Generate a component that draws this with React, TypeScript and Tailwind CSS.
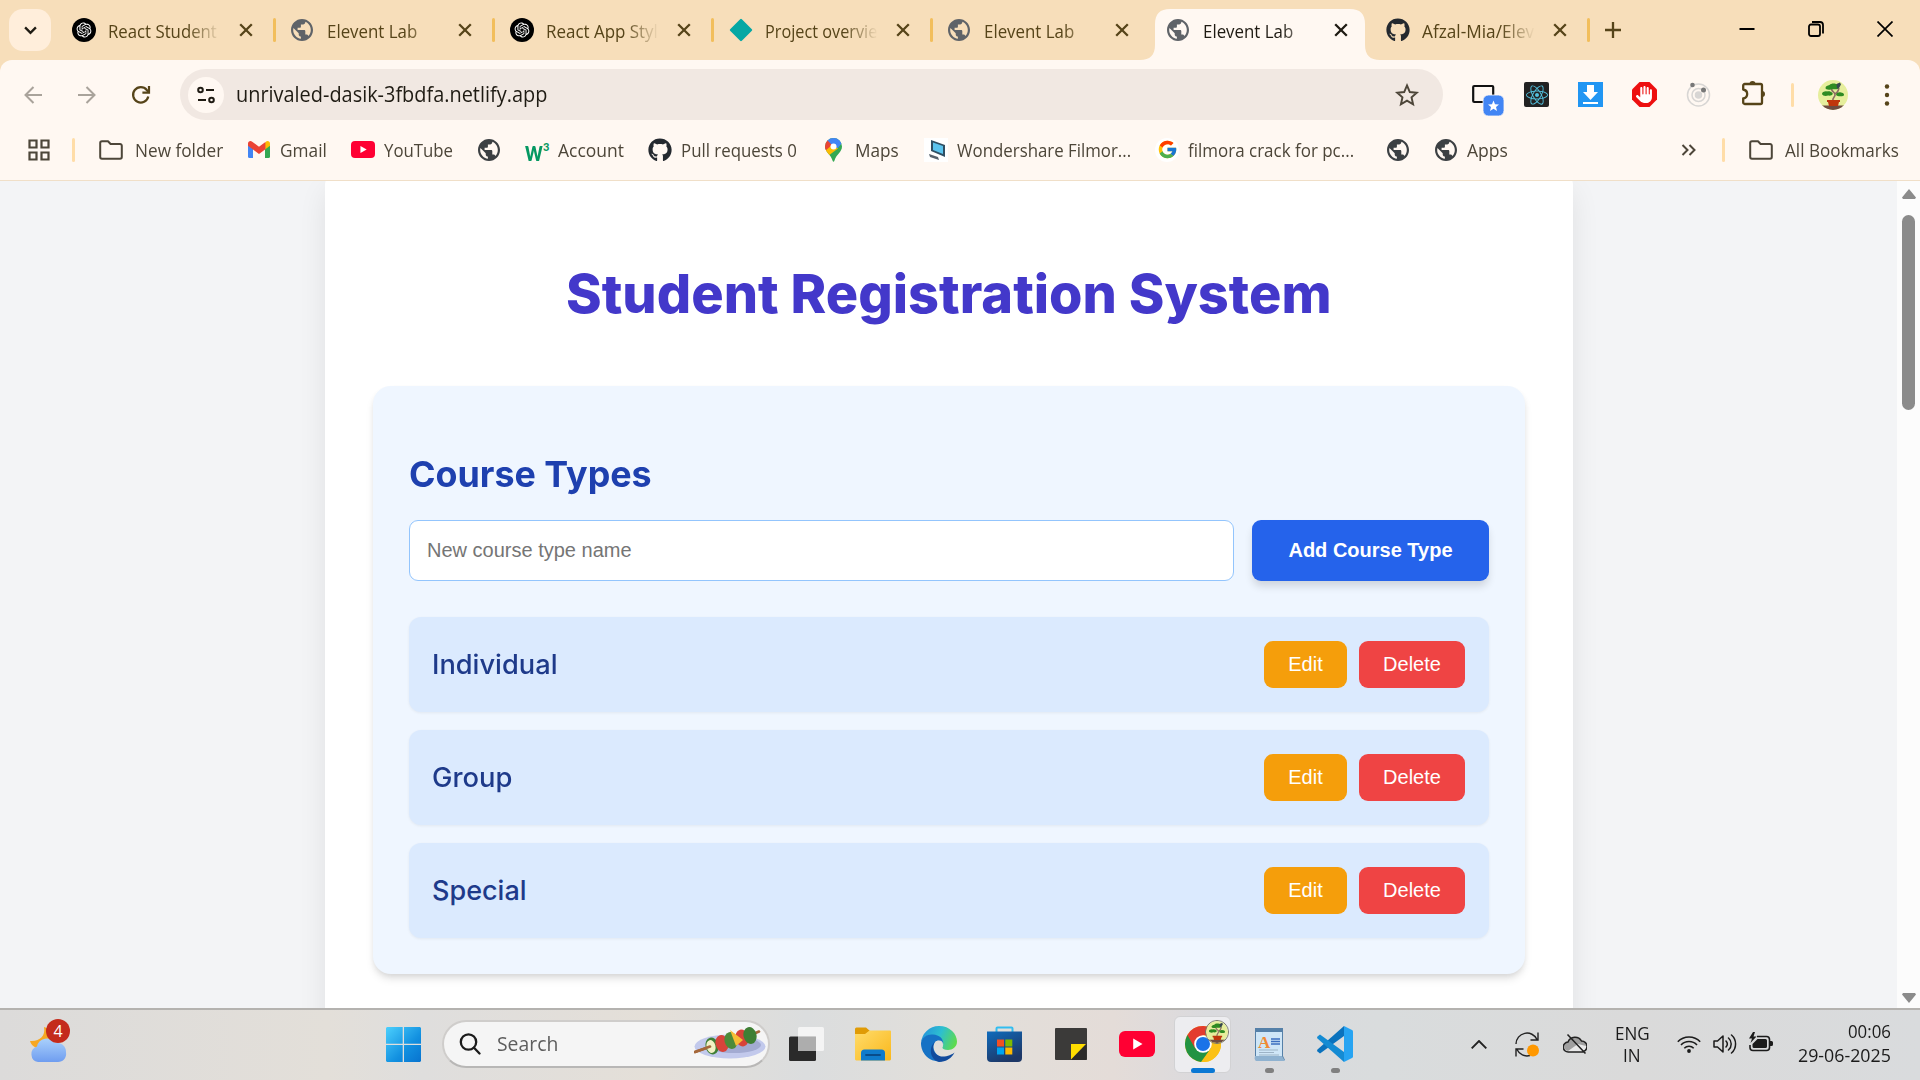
import React, { useLayoutEffect, useRef, useState } from 'react';
import { RiOpenaiFill } from 'react-icons/ri';
import { FaGithub, FaReact, FaHand } from 'react-icons/fa6';
import { FcGoogle } from 'react-icons/fc';

/** Single-line label whose glyphs are condensed or widened to fill `width`. */
function Label({ text, width, className = '' }: { text: string; width: number; className?: string }) {
  const ref = useRef<HTMLSpanElement>(null);
  const [scale, setScale] = useState(1);
  useLayoutEffect(() => {
    if (ref.current) setScale(width / ref.current.offsetWidth);
  }, [width, text]);
  return (
    <span className={`block shrink-0 whitespace-nowrap ${className}`} style={{ width }}>
      <span ref={ref} className="inline-block origin-left" style={{ transform: `scaleX(${scale})` }}>
        {text}
      </span>
    </span>
  );
}

function Globe({ className = '' }: { className?: string }) {
  return (
    <svg viewBox="2 2 20 20" className={`h-[22px] w-[22px] shrink-0 ${className}`} fill="currentColor">
      <path d="M12 2C6.48 2 2 6.48 2 12s4.48 10 10 10 10-4.48 10-10S17.52 2 12 2zm-1 17.93c-3.95-.49-7-3.85-7-7.93 0-.62.08-1.21.21-1.79L9 15v1c0 1.1.9 2 2 2v1.93zm6.900-2.540c-.26-.81-1-1.39-1.900-1.390h-1v-3c0-.55-.45-1-1-1H8v-2h2c.55 0 1-.45 1-1V7h2c1.1 0 2-.9 2-2v-.41c2.930 1.190 5 4.060 5 7.410 0 2.080-.8 3.970-2.100 5.390z" />
    </svg>
  );
}

function OpenAI() {
  return (
    <span className="flex h-6 w-6 items-center justify-center rounded-full bg-black text-white">
      <RiOpenaiFill size={18} />
    </span>
  );
}

function Diamond() {
  return (
    <svg viewBox="0 0 24 24" className="h-6 w-6">
      <path d="M12 2 22 12 12 22 2 12Z" fill="#05a8a4" stroke="#05a8a4" strokeWidth="2.4" strokeLinejoin="round" />
    </svg>
  );
}

function Folder() {
  return (
    <svg viewBox="0 0 24 20" className="h-5 w-6 shrink-0" fill="none" stroke="#4d4639" strokeWidth="2" strokeLinejoin="round">
      <path d="M1.2 17V3a1.8 1.8 0 0 1 1.8-1.8h6L11.6 4H21a1.8 1.8 0 0 1 1.8 1.8V17a1.8 1.8 0 0 1-1.8 1.8H3A1.8 1.8 0 0 1 1.200 17Z" />
    </svg>
  );
}

function Plant({ className = '' }: { className?: string }) {
  return (
    <svg viewBox="0 0 30 30" className={className}>
      <defs>
        <clipPath id="avatar-disc">
          <circle cx="15" cy="15" r="15" />
        </clipPath>
      </defs>
      <g clipPath="url(#avatar-disc)">
        <rect width="30" height="30" fill="#e6ee9c" />
        <rect y="25.500" width="30" height="5" fill="#6d4c41" />
        <path d="M15 21c-1-4 3-4 2-7-.5-2-3-2-3.500-5M16 14c2 0 4-2 5-6" stroke="#8d6e63" strokeWidth="1.600" fill="none" />
        <path d="M7.500 8c0-2 2-2.500 4-3C13 3 18 3 20 5c1.500 0 2 3-.5 4C17 10 15 8.500 13 9.500 10 10 7.500 9.500 7.500 8ZM4 14c0-2 3-3 5-2.500 2-.5 4 0 5.500 1.500 1 2-2 3-4.500 2.500C8 16.500 4.500 16 4 14ZM18 15c0-2 3-3.500 5-2.500 3 0 4 3 2 3.500-2 .5-6 .5-7-1Z" fill="#2e8b22" />
        <path d="M18.500 4l3.500-1.500 1 2-2 3.500-2 .5Z" fill="#37474f" />
        <path d="M9 20h13v2h-1l-1 4h-9l-1-4H9Z" fill="#bf360c" />
      </g>
    </svg>
  );
}

function Cross({ className = '' }: { className?: string }) {
  return (
    <svg viewBox="0 0 14 14" className={`h-[14px] w-[14px] ${className}`} stroke="currentColor" strokeWidth="2.300">
      <path d="M1.200 1.200 12.800 12.800M12.800 1.200 1.200 12.800" />
    </svg>
  );
}

interface TabInfo {
  icon: React.ReactNode;
  title: string;
  width: number;
  active?: boolean;
  divider?: boolean;
}

const tabs: TabInfo[] = [
  { icon: <OpenAI />, title: 'React Student', width: 109, divider: true },
  { icon: <Globe className="text-[#5f6368]" />, title: 'Elevent Lab', width: 90, divider: true },
  { icon: <OpenAI />, title: 'React App Styl', width: 112, divider: true },
  { icon: <Diamond />, title: 'Project overvie', width: 112, divider: true },
  { icon: <Globe className="text-[#5f6368]" />, title: 'Elevent Lab', width: 90 },
  { icon: <Globe className="text-[#5f6368]" />, title: 'Elevent Lab', width: 90, active: true },
  { icon: <FaGithub size={24} color="#24292f" />, title: 'Afzal-Mia/Elev', width: 112, divider: true },
];

function Tab({ tab }: { tab: TabInfo }) {
  return (
    <div className="relative flex h-[60px] w-[219px] shrink-0 items-center pl-[15px]">
      {tab.active && (
        <svg viewBox="0 0 240 51" className="absolute -left-3 top-[9px] h-[51px] w-[240px]" fill="#fff8f2">
          <path d="M0 51C10 51 15 46 15 36V15C15 5 20 0 30 0H210C220 0 225 5 225 15V36C225 46 230 51 240 51Z" />
        </svg>
      )}
      <span className="relative flex h-6 w-6 items-center">{tab.icon}</span>
      <div
        className={`relative ml-3 w-[113px] pt-[2px] [mask-image:linear-gradient(to_right,black_70%,transparent)] ${tab.active ? 'text-[#1f1b13]' : 'text-[#564419]'}`}
      >
        <Label text={tab.title} width={tab.width} className="text-[18px] leading-6" />
      </div>
      <Cross className={`relative ml-[18px] ${tab.active ? 'text-[#1f1b13]' : 'text-[#564419]'}`} />
      {tab.divider && <span className="ml-auto h-6 w-[3px] rounded bg-[#f2be5c]" />}
    </div>
  );
}

function TabStrip() {
  return (
    <div className="flex h-[60px] items-center bg-[#f7deba] pl-[9px]">
      <button className="mr-[6px] flex h-[42px] w-[42px] items-center justify-center rounded-[14px] bg-[#ffeedb]">
        <svg viewBox="0 0 14 10" className="h-[9px] w-[13px]" fill="none" stroke="#1f1b13" strokeWidth="2.600">
          <path d="M1 1.500 7 7.500 13 1.500" />
        </svg>
      </button>
      {tabs.map((tab, i) => (
        <Tab key={i} tab={tab} />
      ))}
      <svg viewBox="0 0 16 16" className="ml-[15px] h-4 w-4" stroke="#564419" strokeWidth="2.300">
        <path d="M8 0V16M0 8H16" />
      </svg>
      <svg viewBox="0 0 16 16" className="ml-[118px] h-4 w-4" stroke="#000" strokeWidth="2">
        <path d="M0.500 7H15.500" />
      </svg>
      <svg viewBox="0 0 16 16" className="ml-[53px] h-4 w-4 -translate-y-px" fill="none" stroke="#000" strokeWidth="1.800">
        <rect x="1" y="3.500" width="11" height="11.500" rx="2" />
        <path d="M4 1H12A3 3 0 0 1 15 4V12.500" />
      </svg>
      <svg viewBox="0 0 16 16" className="ml-[53px] h-4 w-4 -translate-y-px" stroke="#000" strokeWidth="1.700">
        <path d="M.5.5 15.500 15.500M15.500.5.5 15.500" />
      </svg>
    </div>
  );
}

function Arrow({ className = '' }: { className?: string }) {
  return (
    <svg viewBox="0 0 18 18" className={`h-[18px] w-[18px] ${className}`} fill="none" stroke="#a9a39b" strokeWidth="2">
      <path d="M9.500 1 1.500 9 9.500 17M1.500 9H18" />
    </svg>
  );
}

function Toolbar() {
  return (
    <div className="bg-[#f7deba]">
      <div className="flex h-[69px] items-center rounded-t-[12px] bg-[#fff8f2] pl-6">
        <Arrow />
        <Arrow className="ml-9 rotate-180" />
        <svg viewBox="0 0 20 20" className="ml-[35px] h-5 w-5" fill="none" stroke="#564419" strokeWidth="2.200">
          <path d="M17.300 11.500A7.700 7.700 0 1 1 15.800 5L18 7.500" />
          <path d="M18 1V7.600H11.400" />
        </svg>
        <div className="ml-[29px] flex h-[51px] w-[1263px] shrink-0 items-center rounded-full bg-[#f1e8e2] pl-2 pr-[23px]">
          <span className="flex h-9 w-9 items-center justify-center rounded-full bg-[#fff8f2]">
            <svg viewBox="0 0 18 18" className="h-[18px] w-[18px]" fill="none" stroke="#1f1b13" strokeWidth="2">
              <circle cx="3.500" cy="4" r="2.300" />
              <path d="M9 4H17M1 14H9" />
              <circle cx="14.500" cy="14" r="2.300" />
            </svg>
          </span>
          <Label text="unrivaled-dasik-3fbdfa.netlify.app" width={311} className="ml-3 -translate-y-px text-[21px] leading-7 text-[#1f1b13]" />
          <svg viewBox="0 0 24 24" className="ml-auto h-[26px] w-[26px]" fill="none" stroke="#4d4639" strokeWidth="1.800">
            <path d="M12 3.200 14.600 9.300 21 9.900 16.200 14.200 17.600 20.600 12 17.200 6.400 20.600 7.800 14.200 3 9.900 9.400 9.300Z" />
          </svg>
        </div>
        <svg viewBox="0 0 32 32" className="ml-[29px] h-8 w-8 shrink-0 translate-y-[5px]">
          <rect x="1.200" y="2" width="20" height="16" rx="1" fill="#fff8f2" stroke="#111" strokeWidth="2.200" />
          <rect x="11" y="11" width="21" height="21" rx="5.500" fill="#4285f4" stroke="#fff8f2" strokeWidth="0.800" />
          <path d="M21.500 16.500l1.500 3.700 4 .3-3 2.500 1 3.900-3.500-2.200-3.500 2.200 1-3.900-3-2.500 4-.3Z" fill="#fff" />
        </svg>
        <span className="ml-5 flex h-[25px] w-[25px] shrink-0 items-center justify-center rounded-[2px] bg-[#222]">
          <FaReact size={22} color="#53c1de" />
        </span>
        <svg viewBox="0 0 25 25" className="ml-[29px] h-[25px] w-[25px] shrink-0">
          <rect width="25" height="25" fill="#2196f3" />
          <path d="M9 3h7v7h4l-7.500 8L5 10h4ZM5 20h15v2H5Z" fill="#fff" />
        </svg>
        <span className="ml-[29px] flex h-[25px] w-[25px] shrink-0 items-center justify-center bg-[#ed1010] [clip-path:polygon(30%_0,70%_0,100%_30%,100%_70%,70%_100%,30%_100%,0_70%,0_30%)]">
          <FaHand size={17} color="#fff" />
        </span>
        <svg viewBox="0 0 25 25" className="ml-[29px] h-[25px] w-[25px] shrink-0" fill="none" stroke="#d8d6d4" strokeWidth="1.500">
          <circle cx="12.500" cy="13" r="11" />
          <circle cx="12.500" cy="13" r="6.500" />
          <circle cx="12.500" cy="13" r="3" fill="#d8d6d4" />
          <circle cx="6.500" cy="3" r="2.300" fill="#777" stroke="none" />
          <circle cx="17.500" cy="8" r="2.500" fill="#777" stroke="none" />
        </svg>
        <svg viewBox="0 0 26 26" className="ml-[30px] h-[26px] w-[26px] shrink-0 -translate-y-[2px]" fill="none" stroke="#564419" strokeWidth="2.300" strokeLinejoin="round">
          <path d="M2.200 5.500A1.500 1.500 0 0 1 3.700 4H19.500A1.500 1.500 0 0 1 21 5.500V22.500A1.500 1.500 0 0 1 19.500 24H3.700A1.500 1.500 0 0 1 2.200 22.500V18.500C7.500 17.500 7.500 10.500 2.200 9.500Z" />
          <path d="M8.500 4a3 3 0 0 1 6 0ZM21 11a3 3 0 0 1 0 6Z" fill="#564419" stroke="none" />
        </svg>
        <span className="ml-6 h-6 w-[3px] rounded bg-[#ffdda8]" />
        <Plant className="ml-6 h-[30px] w-[30px] shrink-0" />
        <svg viewBox="0 0 24 24" className="ml-[27px] h-6 w-6 shrink-0" fill="#564419">
          <circle cx="12" cy="3.500" r="2.200" />
          <circle cx="12" cy="12" r="2.200" />
          <circle cx="12" cy="20.500" r="2.200" />
        </svg>
      </div>
    </div>
  );
}

function YouTube({ className }: { className: string }) {
  return (
    <svg viewBox="0 0 36 26" className={className} preserveAspectRatio="none">
      <rect width="36" height="26" rx="6" fill="#f03" />
      <path d="M14.200 7.500 23.500 13 14.200 18.500Z" fill="#fff" />
    </svg>
  );
}

function Bookmarks() {
  return (
    <div className="flex h-[52px] items-center border-b border-[#f0dfc8] bg-[#fff8f2] pb-[10px] pl-7 text-[18px] leading-6 text-[#4d4639]">
      <svg viewBox="0 0 22 22" className="h-[22px] w-[22px] shrink-0" fill="none" stroke="#4d4639" strokeWidth="2.200">
        <path d="M1.500 1.500H8.500V8.500H1.500ZM13.500 1.500H20.500V8.500H13.500ZM1.500 13.500H8.500V20.500H1.500ZM13.500 13.500H20.500V20.500H13.500Z" />
      </svg>
      <span className="ml-[22px] h-6 w-[3px] rounded bg-[#ffdda8]" />
      <span className="ml-6">
        <Folder />
      </span>
      <Label text="New folder" width={88} className="ml-3" />
      <svg viewBox="0 0 22 17" className="ml-[25px] h-[17px] w-[22px] shrink-0">
        <path d="M0 3V15.500A1.500 1.500 0 0 0 1.500 17H5V7Z" fill="#4285f4" />
        <path d="M22 3V15.500A1.500 1.500 0 0 1 20.500 17H17V7Z" fill="#34a853" />
        <path d="M17 2V8.500L22 4.800V2.500C22 .2 19.500-.7 17.800.7Z" fill="#fbbc04" />
        <path d="M0 2.500C0 .2 2.500-.7 4.200.7L11 5.800 17.400 1V8.300L11 13 5 8.500 0 4.800Z" fill="#ea4335" />
      </svg>
      <Label text="Gmail" width={47} className="ml-[10px]" />
      <YouTube className="ml-[24px] h-[17px] w-6 shrink-0" />
      <Label text="YouTube" width={69} className="ml-[9px]" />
      <Globe className="ml-[25px] text-[#3c4043]" />
      <span className="ml-[25px] flex w-6 shrink-0 items-start font-['Lato'] font-black leading-none text-[#059862]">
        <Label text="w" width={18} className="text-[28px] leading-4" />
        <span className="text-[11px] leading-[10px]">3</span>
      </span>
      <Label text="Account" width={66} className="ml-[9px]" />
      <FaGithub size={24} color="#24292f" className="ml-[24px] shrink-0" />
      <Label text="Pull requests 0" width={116} className="ml-[9px]" />
      <svg viewBox="0 0 17 24" className="ml-[28px] h-6 w-[17px] shrink-0">
        <defs>
          <clipPath id="maps-pin">
            <path d="M8.500 0A8.500 8.500 0 0 0 0 8.500C0 14 5.500 16 7.500 22.500Q8.500 25 9.500 22.500C11.500 16 17 14 17 8.500A8.500 8.500 0 0 0 8.500 0Z" />
          </clipPath>
        </defs>
        <g clipPath="url(#maps-pin)">
          <rect width="17" height="24" fill="#34a853" />
          <path d="M2 0H17V5L12 11 7 8 2 3Z" fill="#4285f4" />
          <path d="M-1 3 2 2 8.500 8.500 0 14Z" fill="#ea4335" />
          <path d="M7 7 0 13 3 18 13 10.500Z" fill="#fbbc04" />
        </g>
        <circle cx="8.500" cy="8.500" r="3" fill="#fff" />
      </svg>
      <Label text="Maps" width={44} className="ml-[13px]" />
      <svg viewBox="0 0 24 24" className="ml-[25px] h-6 w-6 shrink-0">
        <rect width="24" height="24" fill="#fff" />
        <path d="M7 2 21 7V19L7 13Z" fill="#2f4f63" />
        <path d="M9 4.500 19 8V16L9 12Z" fill="#5cc4ee" />
        <path d="M5 16 14 19 15 22 6 19Z" fill="#56616b" />
      </svg>
      <Label text="Wondershare Filmor..." width={174} className="ml-[9px]" />
      <span className="ml-[24px] flex h-6 w-6 shrink-0 items-center justify-center rounded-full bg-white">
        <FcGoogle size={21} />
      </span>
      <Label text="filmora crack for pc..." width={166} className="ml-[9px]" />
      <Globe className="ml-[33px] text-[#3c4043]" />
      <Globe className="ml-[26px] text-[#3c4043]" />
      <Label text="Apps" width={41} className="ml-[10px]" />
      <svg viewBox="0 0 16 12" className="ml-[173px] h-3 w-4 shrink-0" fill="none" stroke="#4d4639" strokeWidth="2">
        <path d="M1.500 1 6.500 6 1.500 11M8.500 1 13.500 6 8.500 11" />
      </svg>
      <span className="ml-[25px] h-6 w-[3px] rounded bg-[#ffdda8]" />
      <span className="ml-6">
        <Folder />
      </span>
      <Label text="All Bookmarks" width={114} className="ml-3" />
    </div>
  );
}

function Course({ name, width }: { name: string; width: number }) {
  return (
    <li className="flex h-[95px] items-center rounded-[12px] bg-[#dbeafe] pl-[23px] pr-6 shadow-[0_1px_3px_rgba(0,0,0,0.06)]">
      <Label text={name} width={width} className="text-[27px] font-medium leading-10 text-[#1e3a8a]" />
      <div className="ml-auto flex gap-3 font-['Liberation_Sans'] text-[20px] text-white">
        <button className="h-[47px] w-[83px] rounded-[9px] bg-[#f59e0b] pb-[2px]">Edit</button>
        <button className="h-[47px] w-[106px] rounded-[9px] bg-[#ef4444] pb-[2px]">Delete</button>
      </div>
    </li>
  );
}

function Page() {
  return (
    <div className="flex h-[827px] bg-[#f3f4f6] font-['Inter']">
      <main className="flex flex-1 justify-center overflow-hidden pl-[1px]">
        <div className="-mt-2 h-[1000px] w-[1248px] rounded-[12px] bg-white px-12 shadow-[0_15px_30px_-3px_rgba(0,0,0,0.1)]">
          <h1 className="flex justify-center pt-[80px] text-[54px] font-extrabold leading-[81px] text-[#4338ca]">
            <Label text="Student Registration System" width={766} />
          </h1>
          <section className="mt-[52px] h-[588px] rounded-[18px] bg-[#eff6ff] px-9 shadow-[0_6px_9px_-1px_rgba(0,0,0,0.1),0_3px_6px_-2px_rgba(0,0,0,0.1)]">
            <h2 className="pt-[61px] text-[36px] font-bold leading-[54px] text-[#1e40af]">
              <Label text="Course Types" width={243} />
            </h2>
            <div className="mt-[19px] flex gap-[18px] font-['Liberation_Sans'] text-[20px]">
              <input
                placeholder="New course type name"
                className="h-[61px] min-w-0 flex-1 rounded-[9px] border border-[#93c5fd] bg-white px-[17px] placeholder:text-[#757575]"
              />
              <button className="h-[61px] w-[237px] rounded-[9px] bg-[#2563eb] pb-[2px] font-bold text-white shadow-[0_6px_9px_-1px_rgba(0,0,0,0.14)]">
                Add Course Type
              </button>
            </div>
            <ul className="mt-9 flex flex-col gap-[18px]">
              <Course name="Individual" width={125} />
              <Course name="Group" width={80} />
              <Course name="Special" width={95} />
            </ul>
          </section>
        </div>
      </main>
      <div className="flex w-[23px] flex-col items-center bg-[#fcfcfc] pb-[5px] pt-[8px]">
        <svg viewBox="0 0 14 10" className="h-[10px] w-[14px]" fill="#8b8b8b">
          <path d="M7 0 14 8.500 13 10H1L0 8.500Z" />
        </svg>
        <div className="mt-4 h-[195px] w-[13px] rounded-full bg-[#8b8b8b]" />
        <svg viewBox="0 0 14 10" className="mt-auto h-[10px] w-[14px]" fill="#8b8b8b">
          <path d="M7 10 0 1.500 1 0H13L14 1.500Z" />
        </svg>
      </div>
    </div>
  );
}

function Kebab() {
  const pieces: [number, number, string][] = [
    [18, 20, '#3f7f34'],
    [28, 17.5, '#d8433a'],
    [37, 14.5, '#4d8a38'],
    [48, 12, '#d8433a'],
    [56, 9.5, '#3f7f34'],
  ];
  return (
    <svg viewBox="0 0 72 36" className="h-9 w-[72px]">
      <ellipse cx="36" cy="20.500" rx="35.500" ry="12" fill="#c2c9ec" />
      <ellipse cx="40" cy="19" rx="27" ry="8" fill="#a3abd2" />
      <path d="M1 26 17 20.500M58 8.500 65 5.500" stroke="#a5683a" strokeWidth="2.600" strokeLinecap="round" />
      {pieces.map(([x, y, fill], i) => (
        <ellipse key={i} cx={x} cy={y} rx="6.500" ry="8.500" fill={fill} transform={`rotate(-14 ${x} ${y})`} />
      ))}
      <path d="M36 4 49 14 42 20Z" fill="#f7bd35" />
      <ellipse cx="17" cy="20.500" rx="4.500" ry="6.500" fill="#f3f1c6" transform="rotate(-14 17 20.500)" />
      <path d="M1 26 16 20.500" stroke="#a5683a" strokeWidth="2.600" strokeLinecap="round" />
    </svg>
  );
}

function Chrome() {
  return (
    <svg viewBox="0 0 36 36" className="h-9 w-9">
      <circle cx="18" cy="18" r="18" fill="#fbc116" />
      <path d="M18 18 2.400 9A18 18 0 0 0 16 35.900L25.800 22.500Z" fill="#229342" />
      <path d="M18 9.500H33.800A18 18 0 0 0 2.400 9L10.200 22.500Z" fill="#e33b2e" />
      <path d="M33.800 9.500H18L26 22 17 36A18 18 0 0 0 33.800 9.500Z" fill="#fbc116" />
      <circle cx="18" cy="18" r="8.800" fill="#fff" />
      <circle cx="18" cy="18" r="7" fill="#1a73e8" />
    </svg>
  );
}

function Taskbar() {
  return (
    <div className="flex h-[72px] items-center border-t-2 border-[#b4b2af] bg-[linear-gradient(90deg,#dcdbda_0%,#e3dfd9_17%,#dfdedd_22%,#e4dfd8_34%,#dbddde_42%,#e2dfda_50%,#e4dcd8_58%,#dadade_63%,#d9dcdd_72%,#dadada_85%,#d9dbdd_100%)] pb-[2px] pl-[29px]">
      <div className="relative h-[44px] w-[41px] shrink-0">
        <svg viewBox="0 0 41 44" className="h-[44px] w-[41px] -translate-y-[3px]">
          <defs>
            <linearGradient id="cloud" x1="0" y1="0" x2="0" y2="1">
              <stop stopColor="#a9d0fb" />
              <stop offset="1" stopColor="#6f9df0" />
            </linearGradient>
          </defs>
          <path d="M15 8C17 17 10 23 1 22 4 33 22 32 23 18 22 12 19 9 15 8Z" fill="#f7a823" />
          <path d="M9 43A8 8 0 0 1 8 27.500 10 10 0 0 1 26 24 9 9 0 0 1 37 33C38 39 34 43 29 43Z" fill="url(#cloud)" />
        </svg>
        <span className="absolute -top-[3px] right-0 flex h-6 w-6 items-center justify-center rounded-full bg-[#c42b1c] text-[16px] text-white">4</span>
      </div>
      <svg viewBox="0 0 35 35" className="ml-[316px] h-[35px] w-[35px] shrink-0">
        <defs>
          <linearGradient id="win" x1="0" y1="0" x2="1" y2="1">
            <stop stopColor="#4cd0fd" />
            <stop offset="0.600" stopColor="#1290e0" />
            <stop offset="1" stopColor="#0873cf" />
          </linearGradient>
        </defs>
        <path d="M1 0H16.700V16.700H0V1ZM18 0H34L35 1V16.700H18ZM0 18H16.700V35H1L0 34ZM18 18H35V34L34 35H18Z" fill="url(#win)" />
      </svg>
      <div className="ml-[21px] flex h-[48px] w-[328px] shrink-0 items-center rounded-full border-2 border-[#cfcdcb] border-b-[#b8b7b6] bg-[#f5f5f5] pl-[15px]">
        <svg viewBox="0 0 22 22" className="h-[22px] w-[22px]" fill="none" stroke="#1b1b1b" strokeWidth="2.300" strokeLinecap="round">
          <circle cx="9.500" cy="9" r="7.700" />
          <path d="M15 14.700 20.500 20.500" />
        </svg>
        <Label text="Search" width={61} className="ml-4 text-[20px] leading-7 text-[#5d5d5d]" />
        <span className="ml-auto mr-[2px]">
          <Kebab />
        </span>
      </div>
      <svg viewBox="0 0 35 34" className="ml-[19px] h-[34px] w-[35px] shrink-0">
        <rect y="9.500" width="27" height="24.500" rx="1.500" fill="#2a2a2a" />
        <rect x="9" width="26" height="24" rx="1.500" fill="#f6f6f6" fillOpacity="0.900" />
        <path d="M9 9.500H27V24H9Z" fill="#adadad" />
      </svg>
      <svg viewBox="0 0 36 34" className="ml-[31px] h-[34px] w-9 shrink-0">
        <defs>
          <linearGradient id="files" x1="0" y1="0" x2="1" y2="1">
            <stop stopColor="#ffdc6b" />
            <stop offset="1" stopColor="#fab71b" />
          </linearGradient>
        </defs>
        <path d="M0 8V2A1.500 1.500 0 0 1 1.500.5H11L15 4 11 8Z" fill="#e09b06" />
        <path d="M0 7H10L14.500 3.500H35A1 1 0 0 1 36 4.500V32.500L35 33.500H1L0 32.500Z" fill="url(#files)" />
        <path d="M6 33.500V26A3.500 3.500 0 0 1 9.500 22.500H26.500A3.500 3.500 0 0 1 30 26V33.500Z" fill="#0f7bcb" />
        <path d="M11 28H25" stroke="#094c8a" strokeWidth="1.800" strokeLinecap="round" />
      </svg>
      <svg viewBox="0 0 36 36" className="ml-[30px] h-9 w-9 shrink-0">
        <defs>
          <linearGradient id="edge-top" x1="0" y1="0.300" x2="1" y2="0.600">
            <stop stopColor="#2493dc" />
            <stop offset="0.500" stopColor="#2dbfd0" />
            <stop offset="1" stopColor="#5edb4c" />
          </linearGradient>
        </defs>
        <path d="M0 17A18 18 0 0 1 18 0C29 0 36 8 36 15.500 36 21 31.500 24 27 24 23 24 21 22.500 21.500 21 24 16 20 10 12 9 6 8.500 1 12 0 17Z" fill="url(#edge-top)" />
        <path d="M0 17C1 11 6 8 12 8.500 20 9 24 15 21.500 20 21.500 16 17 13 14 16 9 24 17 33 27 33A18 18 0 0 1 0 18Z" fill="#1672c5" />
        <path d="M14 16C10 20 12 29 20 30.500 26 31 31 28.500 33.500 26.500 31 32 25 36 18 36 8 33 8 20 14 16Z" fill="#114a9c" />
        <circle cx="18" cy="18.500" r="4" fill="#dfdddb" />
      </svg>
      <svg viewBox="0 0 35 36" className="ml-[30px] h-9 w-[35px] shrink-0">
        <defs>
          <linearGradient id="store" x1="0" y1="0" x2="0.500" y2="1">
            <stop stopColor="#0f6cbd" />
            <stop offset="1" stopColor="#1d3766" />
          </linearGradient>
        </defs>
        <path d="M9.500 7V2.500A1 1 0 0 1 10.500 1.500H24.500A1 1 0 0 1 25.500 2.500V7" stroke="#32bdf0" strokeWidth="2" fill="none" />
        <path d="M0 5.500H35V32A4 4 0 0 1 31 36H4A4 4 0 0 1 0 32Z" fill="url(#store)" />
        <path d="M10 13.500H17V20.500H10Z" fill="#f25022" />
        <path d="M18.300 13.500H25.300V20.500H18.300Z" fill="#7fba00" />
        <path d="M10 21.500H17V28.500H10Z" fill="#00a4ef" />
        <path d="M18.300 21.500H25.300V28.500H18.300Z" fill="#ffb900" />
      </svg>
      <svg viewBox="0 0 32 32" className="ml-[33px] h-8 w-8 shrink-0">
        <rect width="32" height="32" rx="1" fill="#3b3a39" />
        <path d="M16 31.500V16H31Z" fill="#fd0" />
        <path d="M16 32 31.500 16V32Z" fill="#2b2a29" />
      </svg>
      <YouTube className="ml-8 h-[26px] w-9 shrink-0" />
      <div className="relative ml-[19px] flex h-[57px] w-[57px] shrink-0 items-center justify-center rounded-[6px] border border-[#d2d2d4] bg-[#ededf0]">
        <Chrome />
        <Plant className="absolute right-[1px] top-[3px] h-6 w-6 rounded-full border border-[#77776a]" />
        <span className="absolute -bottom-px left-[16px] h-[5px] w-6 rounded-full bg-[#0a78d4]" />
      </div>
      <div className="relative ml-[23px] shrink-0">
        <svg viewBox="0 0 31 35" className="h-[35px] w-[31px]">
          <path d="M1 1H29V29L31 33H1Z" fill="#5580a8" />
          <path d="M2 5H28V30H2Z" fill="#cfe6f7" />
          <path d="M1 29H28L31 34H2Q0 33 1 29Z" fill="#8fb2d0" />
          <path d="M17 12H26M17 14.500H26M17 17H26" stroke="#3d6fc0" strokeWidth="1.300" />
          <path d="M5 23H24M5 25.500H20M5 28H25" stroke="#9db3c6" strokeWidth="1.100" />
          <text x="4" y="20.500" fontFamily="Liberation Serif" fontWeight="bold" fontSize="17" fill="#f08a35">A</text>
        </svg>
        <span className="absolute -bottom-[11px] left-[11px] h-[5px] w-[9px] rounded-full bg-[#808080]" />
      </div>
      <div className="relative ml-8 shrink-0">
        <svg viewBox="0 0 36 36" className="h-9 w-9">
          <path d="M27 0 0.500 23.500A1.500 1.500 0 0 0 .5 25.500L3 27.500 27 10Z" fill="#0a72bd" />
          <path d="M3 8.500.5 10.500A1.500 1.500 0 0 0 .5 12.500L27 36V26Z" fill="#148bd3" />
          <path d="M27 0 35 4A2 2 0 0 1 36 5.500V30.500A2 2 0 0 1 35 32L27 36Z" fill="#27a4f2" />
        </svg>
        <span className="absolute -bottom-[11px] left-[14px] h-[5px] w-[9px] rounded-full bg-[#808080]" />
      </div>
      <svg viewBox="0 0 16 9" className="ml-[118px] h-[9px] w-4 shrink-0" fill="none" stroke="#222" strokeWidth="1.900">
        <path d="M.7 8.300 8 1 15.300 8.300" />
      </svg>
      <svg viewBox="0 0 24 25" className="ml-7 h-[25px] w-6 shrink-0" fill="none" stroke="#222" strokeWidth="1.400">
        <path d="M1 12A11 11 0 0 1 22 7.500M23 .5V8H15.500M1 24.500V17H8.500M2 17.500A11 11 0 0 0 15 23.500" />
        <circle cx="18" cy="18.500" r="6" fill="#ff9800" stroke="none" />
      </svg>
      <svg viewBox="0 0 24 20" className="ml-6 h-5 w-6 shrink-0">
        <path d="M5.500 18A5 5 0 0 1 5 8 7.500 7.500 0 0 1 18.500 7 5.500 5.500 0 0 1 18.500 18Z" fill="#e9e9e9" />
        <path d="M5 8A7.500 7.500 0 0 1 18.500 7C22 8 23 10 23 12L15 10 5 17Q1 16 1 12 1 9 5 8Z" fill="#a0a0a0" />
        <path d="M5.500 18A5 5 0 0 1 5 8 7.500 7.500 0 0 1 18.500 7 5.500 5.500 0 0 1 18.500 18ZM4.500.5 22.500 19.500" fill="none" stroke="#222" strokeWidth="1.500" />
      </svg>
      <div className="ml-[27px] flex w-9 shrink-0 flex-col items-center text-[18px] leading-[22px] text-[#1b1b1b]">
        <Label text="ENG" width={35} />
        <Label text="IN" width={18} />
      </div>
      <svg viewBox="0 0 24 18" className="ml-[27px] h-[18px] w-6 shrink-0" fill="none" stroke="#1b1b1b" strokeWidth="1.600">
        <path d="M.8 6.800A15.500 15.500 0 0 1 23.200 6.800M4 10A11 11 0 0 1 20 10M7.300 13.200A6.500 6.500 0 0 1 16.700 13.200" />
        <circle cx="12" cy="16" r="1.900" fill="#1b1b1b" stroke="none" />
      </svg>
      <svg viewBox="0 0 24 20" className="ml-3 h-5 w-6 shrink-0" fill="none" stroke="#1b1b1b" strokeWidth="1.500" strokeLinejoin="round">
        <path d="M1 7H4.500L10 2V18L4.500 13H1Z" />
        <path d="M13 7A4.500 4.500 0 0 1 13 13M15.500 4A8 8 0 0 1 15.500 16M18.500 1A12 12 0 0 1 18.500 19" strokeLinecap="round" />
      </svg>
      <svg viewBox="0 0 24 20" className="ml-3 h-5 w-6 shrink-0 -translate-y-[2px]">
        <path d="M8 4.500H17.500A3 3 0 0 1 20.500 7.500V15.500A3 3 0 0 1 17.500 18.500H4A3 3 0 0 1 1 15.500V13" fill="none" stroke="#1b1b1b" strokeWidth="1.600" />
        <path d="M8.500 7H16.500A1.500 1.500 0 0 1 18 8.500V14.500A1.500 1.500 0 0 1 16.500 16H5A1.500 1.500 0 0 1 3.500 14.500V12ZM21 9H22.500A1.500 1.500 0 0 1 24 10.500V12.500A1.500 1.500 0 0 1 22.500 14H21ZM4 0 0 6.500H3L1.500 11 7.500 4.500H4.500L6 0Z" fill="#1b1b1b" />
      </svg>
      <div className="ml-auto mr-[29px] flex flex-col items-end pb-[2px] text-[18px] leading-6 text-[#1b1b1b]">
        <Label text="00:06" width={43} />
        <Label text="29-06-2025" width={93} />
      </div>
    </div>
  );
}

export default function App() {
  return (
    <div className="h-[1080px] w-[1920px] overflow-hidden font-['Open_Sans',sans-serif]">
      <TabStrip />
      <Toolbar />
      <Bookmarks />
      <Page />
      <Taskbar />
    </div>
  );
}
